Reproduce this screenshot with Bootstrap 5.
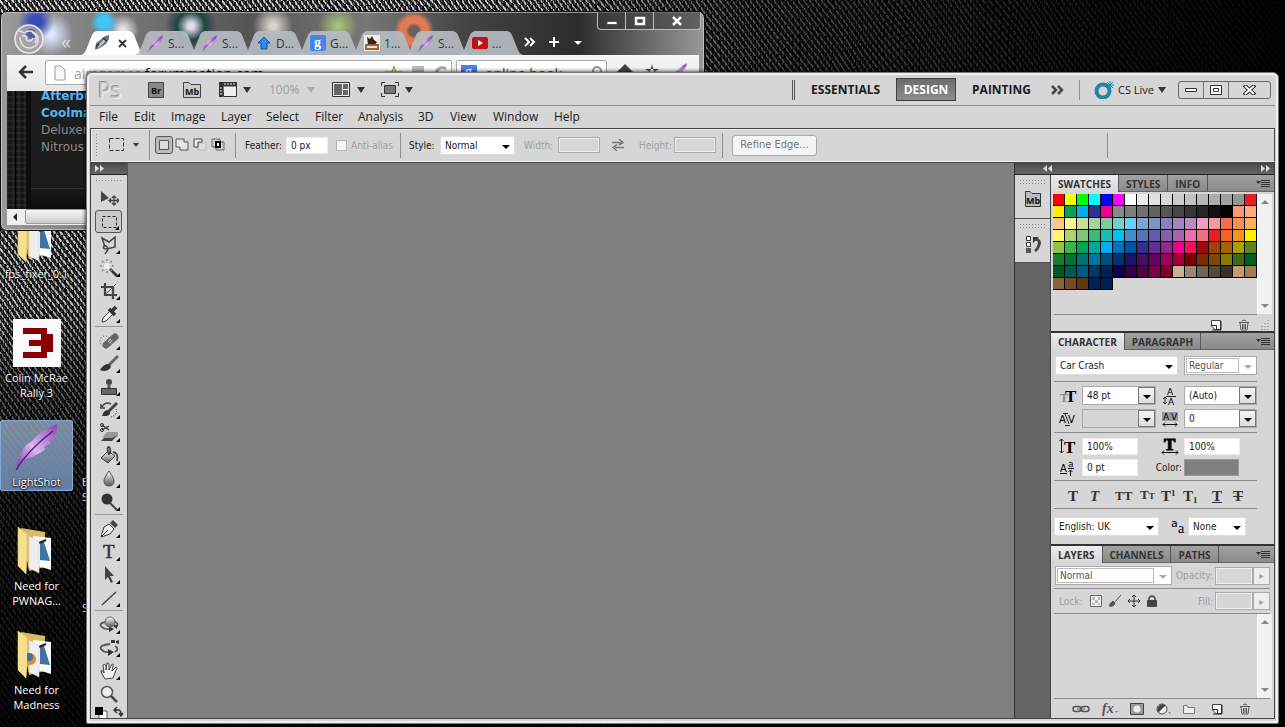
<!DOCTYPE html>
<html lang="en">
<head>
<meta charset="utf-8">
<meta name="viewport" content="width=device-width, initial-scale=1">
<title>Photoshop desktop</title>
<link href="https://cdn.jsdelivr.net/npm/bootstrap@5.3.0/dist/css/bootstrap.min.css" rel="stylesheet">
<style>
:root{--face:#d6d6d6;--rule:#8c8c8c;--ink:#1a1a1a;--dim:#a0a0a0;--ui:"Open Sans","Noto Sans",sans-serif;--small:"DejaVu Sans Condensed","DejaVu Sans",sans-serif}
html,body{height:100%}
body{margin:0;overflow:hidden;background:#050505;font:12px/15px var(--ui);color:var(--ink)}
button,input,select{font:inherit;color:inherit}
button{border:0;background:none;padding:0}
svg{display:block;flex:none}
a{color:inherit;text-decoration:none}
.desktop{position:relative;height:100vh;overflow:hidden}
.wall{position:absolute;inset:0;width:100%;height:100%}
/* desktop icons */
.shortcuts{position:relative;padding-top:212px;width:73px}
.shortcut{height:104px}
.shortcut>a{display:flex;flex-direction:column;align-items:center;padding:2px 0 1px;color:#fff;text-align:center;border:1px solid transparent;border-radius:2px;font-size:11px;text-shadow:0 1px 2px #000,0 0 2px #000}
.shortcut.on>a{background:linear-gradient(#8c9db4dd,#6a86b0ee);border-color:#86a8d5}
.shortcut svg{margin-bottom:3px}
.shortcut a span{white-space:pre-line;width:76px}
.second-col{position:absolute;left:82px;top:474px;color:#fff;font-size:11px}
/* browser */
.browser{position:absolute;left:0;top:11px;width:705px;height:220px;border:1px solid #111;border-radius:7px;box-shadow:inset 0 0 0 1px #ddd9;padding:19px 5px 6px 6px;
background:radial-gradient(circle at 35px 10px,#3a4db8 0 6px,transparent 18px),radial-gradient(circle at 50px 22px,#dfe6ff 0 3px,transparent 22px),radial-gradient(circle at 103px 10px,#42c4f4 0 6px,transparent 14px),radial-gradient(circle at 122px 18px,#e8e8e8 0 2px,transparent 16px),radial-gradient(circle at 190px 14px,#dde 0 3px,#1f4440 14px,transparent 26px),radial-gradient(circle at 272px 14px,#d8d2ca 0 3px,transparent 20px),radial-gradient(circle at 337px 14px,#a8c07a 0 2px,transparent 20px),radial-gradient(circle at 413px 19px,#68605e 0 5px,#e07a54 8px 14px,transparent 20px),linear-gradient(90deg,#9a9a9a,#6e6e6e 22%,#555 35%,#777 52%,#444 66%,#2c2c2c 82%,#999)}
.wbtns{position:absolute;right:3px;top:0;border:1px solid #bbb;border-top:0;border-radius:0 0 4px 4px;overflow:hidden;height:18px;background:#3338}
.wbtns button{width:28px;border-right:1px solid #bbb;display:flex;align-items:center;justify-content:center}
.wbtns button:last-child{width:46px;border:0}
.tabs{height:24px;padding-left:73px}
.fox{position:absolute;left:13px;top:12px}
.chev{position:absolute;left:60px;top:22px;color:#ddd;font-size:20px;line-height:15px}
.btab{width:66px;margin-right:-12px;height:24px;background:#b7bcc3e8;clip-path:path('M0 24 Q4 24 6 19 L12 4 Q14 0 18 0 H48 Q52 0 54 4 L60 19 Q62 24 66 24Z');padding-left:14px;color:#333;font-size:12px}
.btab.live{background:#fff}
.bbar{height:36px;background:linear-gradient(#f6f6f6,#e6e6e6);padding:5px 8px 0 10px;color:#444}
.bbox{background:#fff;border:1px solid #aaa;border-radius:2px;height:25px;overflow:hidden}
.bbox input{border:0;background:none;font-size:14px;padding:0;min-width:0;line-height:18px}
.burl{font-size:14px;line-height:18px;color:#000}
.bpage{height:118px;background:#1c1c1c;color:#8b8b8b;font:13px/17px "DejaVu Sans",sans-serif;padding-left:34px;position:relative;overflow:hidden}
.bpage::before{content:"";position:absolute;left:0;top:0;bottom:0;width:24px;background:linear-gradient(90deg,transparent 8px,#000 8px 9px,transparent 9px 19px,#0c0c0c 19px),radial-gradient(circle,#151515 2px,#2a2a2a 3px) 0 0/6px 6px}
.bpage::after{content:"";position:absolute;left:24px;right:0;top:97px;bottom:0;border-top:1px solid #333;background:linear-gradient(#181818,#0d0d0d)}
.bpage a{display:block;font-size:12px}.bpage .hot{color:#56b3f5;font-weight:700}
.bpage a:first-child{margin-top:-3px}
.bscroll{height:16px;background:#eee;padding-left:18px;position:relative}
.bscroll div{height:15px;border:1px solid #999;border-radius:2px;background:linear-gradient(#f6f6f6,#ccc)}
.bscroll::before{content:"";position:absolute;left:6px;top:4px;border:4px solid transparent;border-right-color:#222;border-left:0}
/* photoshop */
.ps{position:absolute;left:86px;top:72px;right:6px;bottom:3px;background:var(--face);border:1px solid #777;border-radius:6px 6px 2px 2px;box-shadow:inset 0 0 0 2px #f0f0f0,0 0 4px #000;padding:1px 3px 4px 3px}
.appbar{height:32px;border-bottom:1px solid var(--rule);display:grid;grid-template-columns:50px 35px 36px 24px 26px 38px 25px 25px 24px 20px 1fr;align-items:center;padding-left:8px}
.tri{width:0;height:0;border:4px solid transparent;border-top:6px solid #333;border-bottom:0;display:block}
.tri.s{border-width:3px;border-top-width:4px;border-bottom:0}
.tri.dim{border-top-color:#aaa}
.pslogo{font:400 21px/24px "Open Sans",sans-serif;color:#c4c4c4;text-shadow:1px 1px #f2f2f2,-1px -1px #909090}
.ws{font-weight:700;font-size:12px}
.ws.on{background:linear-gradient(#6c6c6c,#8c8c8c);border:1px solid #3e3e3e;color:#fff;height:23px;width:60px}
.dbl{width:3px;height:20px;border-left:1px solid #555;border-right:1px solid #555}
.vr1{width:1px;background:var(--rule)}
.more{margin:0 10px 0 16px;padding:0 4px}
.cslive{margin:0 12px 0 14px;font-size:11px}
.pswin{height:18px;border:1px solid #666;border-radius:3px;overflow:hidden}
.pswin button{width:25px;border-right:1px solid #777;display:flex;align-items:center;justify-content:center}
.pswin button:last-child{width:41px;border:0}
.menus{height:22px;display:grid;grid-template-columns:35px 37px 50px 45px 49px 43px 60px 32px 43px 61px 1fr;align-items:center;padding-left:9px}
.menus a{line-height:20px}
.opts{height:34px;border:1px solid #444;border-bottom-color:#f2f2f2;box-shadow:inset 1px 1px #eee;display:grid;grid-template-columns:18px 24px 16px 6px 80px 10px 41px 50px 64px 9px 31px 84px 34px 54px 27px 35px 48px 10px 85px 290px 1fr;align-items:center;font-family:var(--small);font-size:10px;padding-left:0}
.opts .vr1{height:25px}
.dim{color:var(--dim)}
.grip{background:radial-gradient(circle,#888 0 .7px,transparent 1px) 0 0/3px 3px}
.fld{background:#fff;border:1px solid #ececec;border-radius:0;padding:0 4px;height:17px;width:100%;min-width:0;font-family:var(--small);font-size:10px;display:block}
.fld.off{background:var(--face);border:1px solid #aaa;box-shadow:inset 0 0 0 1px #eee;height:16px}
.tick{width:11px;height:11px;appearance:none;background:#f4f4f4;border:1px solid #b5b5b5;margin:0}
.w42{width:42px!important}.w56{width:56px!important}
.pick{position:relative;display:block}
.pick select{appearance:none;width:100%;height:19px;border:1px solid #ddd;background:#fff;border-radius:0;padding:0 4px;font-family:var(--small);font-size:10px;display:block;color:inherit;opacity:1}
.pick::after{content:"";position:absolute;right:5px;top:9px;border:4px solid transparent;border-top-color:#000;border-bottom:0;pointer-events:none}
.pick.btnd select{border-color:#aaa}
.pick.btnd::before{content:"";position:absolute;right:1px;top:1px;bottom:1px;width:17px;border:1px solid #777;background:linear-gradient(#f4f4f4,#ddd);pointer-events:none}
.pick.empty select{background:var(--face)}
.pick.off{color:#555}.pick.off::before{content:"";position:absolute;inset:2px 18px 2px 2px;border:1px solid #bbb;pointer-events:none}
.pick.off select{border-color:#aaa}
.pick.off::after{border-top-color:#aaa}
.mode{width:18px;height:18px;display:flex;align-items:center;justify-content:center}
.mode.on{border:1px solid #555;border-radius:3px;background:#bbb}
.refine{height:21px;border:1px solid #a5abb0;border-radius:3px;background:#f4f4f4;color:#777;font-family:var(--small);font-size:11px;line-height:14px}
.work{display:flex;min-height:0;flex:1;border:1px solid #444}
.hdr{height:12px;background:linear-gradient(#4a4a4a,#666);border-bottom:1px solid #222;color:#ddd;display:flex;align-items:center;flex:none}
.tools{width:37px;border-right:1px solid #555;background:var(--face)}
.tool{width:27px;height:23px;display:flex;align-items:center;justify-content:center;position:relative;margin:0 auto 0 4px}
.tool.on{border:1px solid #555;border-radius:3px;background:#c9c9c9}
.tool.m::after{content:"";position:absolute;right:2px;bottom:2px;border:2px solid #000;border-top-color:transparent;border-left-color:transparent}
.tsep{height:1px;margin:1px 4px 2px;background:#999;flex:none}
.canvas{background:#808080}
.dock{width:260px;background:#646464;border-left:1px solid #333}
.iconcol{width:35px}
.iconcol>div{background:var(--face);border-bottom:1px solid #555;height:44px;padding-top:4px}
.iconcol .grip{height:5px;margin:0 4px 6px}
.panels{width:224px;border-left:1px solid #444;background:#333;gap:2px}
.panel{background:var(--face)}
.ptabs{height:17px;background:linear-gradient(#a2a2a2,#8a8a8a);border-bottom:1px solid #666;font-weight:700;font-size:10px}
.ptabs button{border-right:1px solid #555;padding:0 7px;height:17px;color:#333;line-height:16px}
.ptabs button.on{background:linear-gradient(#eee,#d6d6d6)}
.sw{display:grid;grid-template-columns:repeat(17,12px);align-content:start;width:204px}
.sw button{height:12px;border:solid #000;border-width:0 1px 1px 0}
.sbar{width:15px;background:#f1f1f1;border-left:1px solid #fff;padding:6px 0;display:flex;flex-direction:column;justify-content:space-between;align-items:center}
.sbar.tall{height:120px}
.sbar i{border:4px solid transparent}
.sbar i:first-child{border-bottom-color:#888;border-top:0}.sbar i:last-child{border-top-color:#888;border-bottom:0}
.rl{height:1px;background:var(--rule);margin:0 17px 0 3px}
.crow{display:grid;grid-template-columns:27px 74px 28px 73px;row-gap:4px;padding:4px 0 4px 4px;align-items:center;font-family:var(--small);font-size:10px}
.colorlbl{margin-left:-20px;padding-right:2px;text-align:right}
.colorbtn{width:55px;height:17px;background:#808080;border:1px solid #999}
.ser{display:grid;grid-template-columns:22px 25px 25px 21px 22px 29px 21px 20px;padding:6px 0 4px 17px;font-family:"Liberation Serif",serif;font-weight:700;font-size:15px;line-height:16px;color:#333}
.ser button{text-align:left}
.caps{font-size:13px}.tiny{font-size:9px}
.lrow{padding:3px 4px;font:10px var(--small)}
.lrow .fld{width:38px;height:18px}
.slid{width:17px;height:18px;border:1px solid #aaa;background:#eee}
</style>
</head>
<body>
<svg width="0" height="0" class="position-absolute">
<defs>
<linearGradient id="met" x1="0" y1="0" x2="0" y2="1"><stop stop-color="#fff"/><stop offset="1" stop-color="#555"/></linearGradient>
<linearGradient id="pur" x1="1" y1="0" x2="0" y2="1"><stop stop-color="#8d43b5"/><stop offset=".55" stop-color="#dcb6ee"/><stop offset="1" stop-color="#7f35aa"/></linearGradient>
<symbol id="feather" viewBox="0 0 48 48"><path d="M44 1Q45 12 37 18L38 20 31 24 33 26Q22 34 8 38L4 47Q3 36 9 29 11 22 18 19 29 6 44 1Z" fill="url(#pur)"/><path d="M3 47Q14 28 40 8" fill="none" stroke="#4d1773" stroke-width="1.300"/></symbol>
<symbol id="folder" viewBox="0 0 48 48"><path d="M8 1 32 5V40L16 44Z" fill="#d9bd63"/><path d="M20 9 38 11V43L22 38Z" fill="#fbfbfb"/><path d="M27 14 31 15 37 34 27 33Z" fill="#3d74a3"/><path d="M26 16 33 13" stroke="#222" stroke-width="2"/><path d="M16 9 26 15V46L16 41Z" fill="#eee" stroke="#ccc" stroke-width=".6"/><path d="M5 0 14 7V32L13 47 5 39Z" fill="#f7df90" stroke="#e2c469" stroke-width=".6"/></symbol>
<symbol id="menuic" viewBox="0 0 14 8"><path d="M0 2H5L2.500 5Z" fill="#333"/><path d="M5 1.500H14M5 3.500H14M5 5.500H14M5 7.500H14" stroke="#333"/></symbol>
<symbol id="newpg" viewBox="0 0 12 12"><path d="M1.500 1.500H10.500V10.500H5L1.500 7Z" fill="#f4f4f4" stroke="#444"/><path d="M2 6.500H6.500V10" fill="none" stroke="#222"/><path d="M11 2V11H2" fill="none" stroke="#222"/></symbol>
<symbol id="trash" viewBox="0 0 12 12"><path d="M2 4 3 11H9L10 4" fill="#ddd" stroke="#555"/><path d="M1 3.500H11M4 2 6 1 8 2M4.500 5V10M6 5V10M7.500 5V10" fill="none" stroke="#555"/></symbol>
<pattern id="weave" width="6" height="8" patternUnits="userSpaceOnUse"><rect width="6" height="8" fill="#0a0a0a"/><path d="M0 0 2 4M3 4 5 8" stroke="#e2e2e2" stroke-width="1.800"/><path d="M3 0 4 2M0 5 1 7" stroke="#777"/></pattern>
<linearGradient id="fadeY" x1="0" y1="0" x2="0" y2="1"><stop stop-color="#000" stop-opacity="0"/><stop offset=".42" stop-color="#000" stop-opacity=".15"/><stop offset=".52" stop-color="#000" stop-opacity=".55"/><stop offset=".7" stop-color="#000" stop-opacity=".82"/><stop offset="1" stop-color="#000" stop-opacity=".95"/></linearGradient>
<linearGradient id="fadeX" x1="0" y1="0" x2="1" y2="0"><stop stop-color="#000" stop-opacity="0"/><stop offset=".4" stop-color="#000" stop-opacity=".1"/><stop offset=".58" stop-color="#000" stop-opacity=".65"/><stop offset=".85" stop-color="#000" stop-opacity=".9"/><stop offset="1" stop-color="#000" stop-opacity=".97"/></linearGradient>
<filter id="wavy"><feTurbulence type="fractalNoise" baseFrequency=".018 .012" numOctaves="1" seed="4"/><feDisplacementMap in="SourceGraphic" scale="30"/></filter>
</defs></svg>

<main class="desktop">
<svg class="wall"><rect x="-30" y="-30" width="110%" height="110%" fill="url(#weave)" filter="url(#wavy)"/><rect width="100%" height="100%" fill="url(#fadeY)"/><rect width="100%" height="100%" fill="url(#fadeX)"/></svg>

<nav class="shortcuts">
 <div class="shortcut"><a href="#"><svg width="48" height="48"><use href="#folder"/></svg><span>fps_fixer_0.1</span></a></div>
 <div class="shortcut"><a href="#"><svg width="48" height="48"><path fill="#fafafa" d="M0 0H48V48H0Z"/><path fill="#8b0000" d="M10 9H34V15H40V33H34V39H10V33H28V27H16V21H28V15H10Z"/></svg><span>Colin McRae
Rally 3</span></a></div>
 <div class="shortcut on"><a href="#"><svg width="48" height="48"><use href="#feather"/></svg><span>LightShot</span></a></div>
 <div class="shortcut"><a href="#"><svg width="48" height="48"><use href="#folder"/></svg><span>Need for
PWNAG...</span></a></div>
 <div class="shortcut"><a href="#"><svg width="48" height="48"><use href="#folder"/><circle cx="17" cy="28" r="6" fill="#e88a25"/><circle cx="16" cy="26" r="4" fill="#3d74a3"/><path d="M5 0 14 7V32L13 47 5 39Z" fill="#f7df90"/></svg><span>Need for
Madness</span></a></div>
</nav>
<div class="second-col">E<br>S<div class="mt-5 pt-5">S</div></div>

<section class="browser">
 <svg class="fox" width="30" height="30"><circle cx="15" cy="15" r="14" fill="#aaac" stroke="#e8e8e8" stroke-width="1.600"/><circle cx="17" cy="10" r="5" fill="#55609b"/><path d="M5 7Q8 7 10 9 16 5 21 9 26 13 23 20 18 26 11 23 6 20 6 13M8 12Q11 11 13 13 11 15 14 17 18 17 19 14M18 8Q25 12 21 19" fill="none" stroke="#e4e4e4" stroke-width="1.500"/></svg>
 <span class="chev">«</span>
 <div class="wbtns d-flex"><button aria-label="Minimize"><svg width="12" height="8"><path fill="#fff" stroke="#555" d="M1 4.500H11V7.500H1Z"/></svg></button><button aria-label="Maximize"><svg width="12" height="10"><path fill="none" stroke="#fff" stroke-width="2.500" d="M2 2H10V8H2Z"/></svg></button><button aria-label="Close"><svg width="12" height="10"><path stroke="#fff" stroke-width="2.500" d="M2 1 10 9M10 1 2 9"/></svg></button></div>
 <div class="tabs d-flex">
  <button class="btab live d-flex align-items-center" aria-label="Active tab"><svg width="16" height="16"><path d="M1 15 2 8 5 6 11 1 15 0 15 4 12 9 6 13Z" fill="#6c7585"/><path d="M4 12 12 4" stroke="#c6d0e0" stroke-width="2"/><path d="M2 12 5 9M9 3 13 6" stroke="#333d50" stroke-width="2"/></svg><svg class="ms-2" width="9" height="9"><path d="M1 1 8 8M8 1 1 8" stroke="#333" stroke-width="1.800"/></svg></button>
  <button class="btab d-flex align-items-center gap-1"><svg width="16" height="16"><use href="#feather"/></svg>S...</button>
  <button class="btab d-flex align-items-center gap-1"><svg width="16" height="16"><use href="#feather"/></svg>S...</button>
  <button class="btab d-flex align-items-center gap-1"><svg width="16" height="16"><path d="M8 2 14 8H11V14H5V8H2Z" fill="#2c8df2" stroke="#0d56ae"/></svg>D...</button>
  <button class="btab d-flex align-items-center gap-1"><svg width="16" height="16"><rect width="16" height="16" rx="2" fill="#4484f0"/><text x="4" y="12" fill="#fff" font-size="14" font-weight="700" font-family="Liberation Serif">g</text></svg>G...</button>
  <button class="btab d-flex align-items-center gap-1"><svg width="16" height="16"><path fill="#f2ece6" d="M0 0H16V16H0Z"/><path fill="#3a1f16" d="M3 2 6 4 8 1 10 5 13 7 11 10H4Z"/><path fill="#a85f30" d="M1 9H15V15H1Z"/><path fill="#e8e0d6" d="M3 11H13V13H3Z"/></svg>1...</button>
  <button class="btab d-flex align-items-center gap-1"><svg width="16" height="16"><use href="#feather"/></svg>S...</button>
  <button class="btab d-flex align-items-center gap-1"><svg width="16" height="12"><rect width="16" height="12" rx="2" fill="#c5100f"/><path fill="#fff" d="M6 3 11 6 6 9Z"/></svg>...</button>
  <svg style="margin-left:12px" width="66" height="22"><path d="M1 7 5 11 1 15M6 7 10 11 6 15M25 11H35M30 6V16" fill="none" stroke="#fff" stroke-width="2"/><path d="M50 10H58L54 14Z" fill="#fff"/></svg>
 </div>
 <div class="bbar d-flex align-items-start gap-1">
  <svg class="me-1 mt-1" width="20" height="16"><path d="M16 8H3M9 2 3 8 9 14" fill="none" stroke="#333" stroke-width="2.500"/></svg>
  <div class="bbox d-flex flex-grow-1 ps-2 pt-1 gap-1"><svg class="me-1" width="12" height="16"><path d="M1 1H7L11 5V15H1Z" fill="#f8f8f8" stroke="#999"/></svg><div class="burl flex-grow-1"><span class="dim">aimgames.</span>forummotion.com</div><svg width="66" height="20"><path d="M9 1 11 7H18L12 11 14 18 9 14 4 18 6 11 0 7H7Z" fill="#f4dc86" stroke="#b78d2c"/><rect x="27" y="1" width="12" height="14" fill="#bbb"/><path d="M63 10A6 6 0 1 1 61 4" fill="none" stroke="#aaa" stroke-width="3"/></svg></div>
  <div class="bbox d-flex ps-1 pt-1 gap-2 align-items-start"><svg width="16" height="16"><rect width="16" height="16" fill="#4484f0"/><text x="4" y="11" fill="#fff" font-size="14" font-weight="700" font-family="Liberation Serif">g</text></svg><input aria-label="Search" size="10" value="online book"><svg width="16" height="16"><circle cx="7" cy="6" r="4" fill="none" stroke="#999" stroke-width="2"/></svg></div>
  <svg class="ms-1" width="76" height="18"><path d="M2 12 10 4 18 12M30 9H44L39 12 37 4 35 12Z" fill="#444"/><use href="#feather" x="58" y="3" width="15" height="15"/></svg>
 </div>
 <div class="bpage"><a class="hot" href="#">Afterburner</a><a class="hot" href="#">Coolmath</a><a href="#">Deluxeness</a><a href="#">Nitrous</a></div>
 <div class="bscroll"><div></div></div>
</section>

<section class="ps d-flex flex-column">
 <header class="appbar">
  <span class="pslogo">Ps</span>
  <button aria-label="Bridge"><svg width="16" height="16"><path d="M.5 .5H15.500V15.500H.5Z" fill="#888" stroke="#444"/><text x="3" y="12" font-size="9" font-weight="700" fill="#111" font-family="Open Sans">Br</text></svg></button>
  <button aria-label="Mini Bridge"><svg width="19" height="16"><path d="M.5 .5H6L8 2.500H17.500V15.500H.5Z" fill="#ccc" stroke="#444"/><text x="2" y="13" font-size="9" font-weight="700" fill="#111" font-family="Open Sans">Mb</text></svg></button>
  <button aria-label="View extras"><svg width="18" height="16"><path d="M0 0H18V4H4V15H0Z" fill="#333"/><path d="M4 4H17.500V14.500H4.500Z" fill="#eee" stroke="#333"/><path d="M6 1V3M9 1V3M12 1V3M15 1V3M1 6H3M1 9H3M1 12H3" stroke="#eee"/></svg></button>
  <span class="tri"></span><span class="dim">100%</span><span class="tri dim"></span>
  <button aria-label="Arrange"><svg width="18" height="16"><path d="M.5 .5H17.500V14.500H.5Z" fill="#eee" stroke="#333"/><path d="M2 2H10V13H2ZM11 2H16V7H11ZM11 8H16V13H11Z" fill="#666"/></svg></button>
  <span class="tri"></span>
  <button aria-label="Screen mode"><svg width="18" height="16"><path d="M.5 4V.5H4M14 .5H17.500V4M.5 11V14.500H4M14 14.500H17.500V11" fill="none" stroke="#333"/><path d="M3.500 3.500H14.500V11.500H3.500Z" fill="#777" stroke="#333"/></svg></button>
  <div class="d-flex align-items-center">
   <span class="tri ms-1"></span>
   <div class="d-flex align-items-center ms-auto pe-1">
    <span class="dbl"></span>
    <button class="ws ms-3">ESSENTIALS</button><button class="ws on mx-3">DESIGN</button><button class="ws">PAINTING</button>
    <button class="more" aria-label="More workspaces"><svg width="14" height="10"><path d="M1 1 5 5 1 9M7 1 11 5 7 9" fill="none" stroke="#444" stroke-width="2.500"/></svg></button>
    <span class="vr1" style="height:20px"></span>
    <button class="cslive d-flex align-items-center gap-1"><svg width="20" height="18"><circle cx="9" cy="10" r="6.500" fill="none" stroke="#2584ab" stroke-width="4"/><path d="M16 0V8M12 4H20M13 1 19 7M19 1 13 7" stroke="#1c86b6"/></svg>CS Live<span class="tri"></span></button>
    <div class="pswin d-flex"><button aria-label="Minimize"><svg width="12" height="6"><path d="M.5 1.500H11.500V4.500H.5Z" fill="#fff" stroke="#333"/></svg></button><button aria-label="Restore"><svg width="12" height="10"><path d="M.5 .5H11.500V9.500H.5ZM3.500 3.500H8.500V6.500H3.500Z" fill="#fff" stroke="#333"/></svg></button><button aria-label="Close"><svg width="13" height="10"><path d="M1 0 12 10M12 0 1 10" stroke="#333" stroke-width="4"/><path d="M2 1 11 9M11 1 2 9" stroke="#fff" stroke-width="2"/></svg></button></div>
   </div>
  </div>
 </header>
 <nav class="menus"><a href="#">File</a><a href="#">Edit</a><a href="#">Image</a><a href="#">Layer</a><a href="#">Select</a><a href="#">Filter</a><a href="#">Analysis</a><a href="#">3D</a><a href="#">View</a><a href="#">Window</a><a href="#">Help</a></nav>
 <div class="opts">
  <span class="grip ms-1" style="width:4px;height:24px"></span>
  <svg width="16" height="14"><path d="M.5 .5H14.500V12.500H.5Z" fill="none" stroke="#333" stroke-dasharray="4 2"/></svg>
  <span class="tri s"></span><span class="vr1" style="height:30px"></span>
  <div class="d-flex">
   <button class="mode on" aria-label="New selection"><svg width="12" height="12"><path d="M1.500 1.500H10.500V10.500H1.500Z" fill="#ddd" stroke="#555"/></svg></button>
   <button class="mode" aria-label="Add"><svg width="14" height="14"><path d="M1 1H9V4H13V12H5V9H1Z" fill="#e4e4e4" stroke="#555"/></svg></button>
   <button class="mode" aria-label="Subtract"><svg width="14" height="14"><path d="M5 5H13V12H5Z" fill="#ddd" stroke="#bbb"/><path d="M1 9V1H9V4H5V9Z" fill="#eee" stroke="#444"/></svg></button>
   <button class="mode" aria-label="Intersect"><svg width="14" height="14"><path d="M1 1H9V9H1ZM5 4H13V12H5Z" fill="#ccc" stroke="#666"/><path d="M5 4H9V9H5Z" fill="#fff" stroke="#000" stroke-width="2"/></svg></button>
  </div>
  <span class="vr1"></span>
  <label for="fe">Feather:</label><span class="pe-2"><input id="fe" class="fld" value="0 px"></span>
  <label class="d-flex align-items-center gap-1 dim"><input type="checkbox" class="tick">Anti-alias</label>
  <span class="vr1"></span>
  <label for="st">Style:</label><span class="pick" style="width:75px"><select id="st"><option>Normal</option></select></span>
  <label for="wi" class="dim">Width:</label><span><input id="wi" class="fld off w42"></span>
  <svg width="12" height="12"><path d="M0 3.500H9M7 0 11 3.500 7 6M12 8.500H3M5 5.500 1 8.500 5 12" fill="none" stroke="#777" stroke-width="1.500"/></svg>
  <label for="he" class="dim">Height:</label><span><input id="he" class="fld off w42"></span>
  <span class="vr1"></span><button class="refine">Refine Edge...</button><span></span><span class="vr1"></span>
 </div>
 <div class="work">
  <aside class="tools d-flex flex-column overflow-hidden">
   <div class="hdr ps-1"><svg width="9" height="7"><path d="M0 0 4 3.500 0 7ZM5 0 9 3.500 5 7Z" fill="#ddd"/></svg></div>
   <div class="grip mx-1 my-1 flex-shrink-0" style="height:4px"></div>
   <div id="tools" class="flex-grow-1"></div>
  </aside>
  <div class="canvas flex-grow-1"></div>
  <aside class="dock d-flex flex-column">
   <div class="hdr px-1"><svg class="ms-4" width="9" height="7"><path d="M4 0 0 3.500 4 7ZM9 0 5 3.500 9 7Z" fill="#ddd"/></svg><svg class="ms-auto" width="9" height="7"><path d="M0 0 4 3.500 0 7ZM5 0 9 3.500 5 7Z" fill="#ddd"/></svg></div>
   <div class="d-flex flex-grow-1">
    <div class="iconcol">
     <div><div class="grip"></div><button class="d-flex mx-auto" aria-label="Mini Bridge"><svg width="18" height="18"><path d="M1.500 1.500H6L8 3.500H16.500V16.500H1.500Z" fill="#bbb" stroke="#333"/><text x="2" y="14" font-size="9" font-weight="700" fill="#111" font-family="Open Sans">Mb</text></svg></button></div>
     <div><div class="grip"></div><button class="d-flex mx-auto" aria-label="History"><svg width="18" height="20"><path d="M2.500 2.500H6.500V6.500H2.500ZM2.500 8.500H6.500V12.500H2.500Z" fill="#fff" stroke="#333"/><path d="M2 14H7V19H2Z" fill="#555"/><path d="M9 3H15L9 9Z" fill="#333"/><path d="M11 5Q17 6 15 11 14 15 11 17" fill="none" stroke="#444" stroke-width="3"/></svg></button></div>
    </div>
    <div class="panels d-flex flex-column flex-grow-1">
     <section class="panel">
      <div class="ptabs d-flex"><button class="on">SWATCHES</button><button>STYLES</button><button>INFO</button><svg class="ms-auto me-1 mt-1" width="14" height="8"><use href="#menuic"/></svg></div>
      <div class="d-flex justify-content-between" style="padding:2px 2px 0"><div id="sw" class="sw"></div><div class="sbar tall"><i></i><i></i></div></div>
      <div class="rl"></div>
      <div class="d-flex justify-content-end gap-3 pt-1" style="height:16px"><button aria-label="New swatch"><svg width="12" height="12"><use href="#newpg"/></svg></button><button aria-label="Delete swatch"><svg width="12" height="12"><use href="#trash"/></svg></button><svg style="margin-left:-6px" class="me-1" width="10" height="11"><path d="M8 1V11M5 4V11M2 7V11" stroke="#888" stroke-dasharray="1 2"/></svg></div>
     </section>
     <section class="panel">
      <div class="ptabs d-flex"><button class="on">CHARACTER</button><button>PARAGRAPH</button><svg class="ms-auto me-1 mt-1" width="14" height="8"><use href="#menuic"/></svg></div>
      <div class="d-flex" style="padding:6px 0 6px 4px;gap:6px"><span class="pick" style="width:123px"><select aria-label="Font"><option>Car Crash</option></select></span><span class="pick off" style="width:73px"><select aria-label="Font style"><option>Regular</option></select></span></div>
      <div class="rl"></div>
      <div class="crow">
       <svg width="22" height="18"><text x="5" y="15" font-size="12" fill="#888" font-family="Liberation Serif" font-weight="700">T</text><text x="10" y="15" font-size="17" font-weight="700" font-family="Liberation Serif">T</text></svg><span class="pick btnd"><select aria-label="Size"><option>48 pt</option></select></span>
       <svg class="mx-auto" width="16" height="18"><text x="5" y="8" font-size="9" font-family="DejaVu Sans">A</text><text x="6" y="18" font-size="9" font-family="DejaVu Sans">A</text><path d="M4 9.500H14M3 10V17M1 12 3 10 5 12M1 15 3 17 5 15" stroke="#222" fill="none"/></svg><span class="pick btnd"><select aria-label="Leading"><option>(Auto)</option></select></span>
       <svg width="22" height="16"><text x="4" y="12" font-size="10" font-family="DejaVu Sans">A</text><text x="13" y="12" font-size="10" font-family="DejaVu Sans">V</text><path d="M10 3 14 13M8 2.500H13M10 14.500H15" stroke="#222"/></svg><span class="pick btnd empty"><select aria-label="Kerning"><option></option></select></span>
       <svg class="mx-auto" width="18" height="16"><path fill="#999" d="M1 1H17V10H1Z"/><text x="2" y="9" font-size="9" font-family="DejaVu Sans">A</text><text x="10" y="9" font-size="9" font-family="DejaVu Sans">V</text><path d="M2 13.500H16M4 11.500 2 13.500 4 15.500M14 11.500 16 13.500 14 15.500" fill="none" stroke="#111"/></svg><span class="pick btnd"><select aria-label="Tracking"><option>0</option></select></span>
      </div>
      <div class="rl"></div>
      <div class="crow">
       <svg width="22" height="16"><text x="9" y="15" font-size="17" font-weight="700" font-family="Liberation Serif">T</text><path d="M6.500 1V15M4.500 3 6.500 1 8.500 3M4.500 13 6.500 15 8.500 13" fill="none" stroke="#111"/></svg><input class="fld w56" aria-label="Vertical scale" value="100%">
       <svg class="mx-auto" width="18" height="18"><text x="3" y="13" font-size="17" font-weight="700" font-family="Liberation Serif" stroke="#000">T</text><path d="M1 15.500H17M3 13.500 1 15.500 3 17.500M15 13.500 17 15.500 15 17.500" fill="none" stroke="#111"/></svg><input class="fld w56" aria-label="Horizontal scale" value="100%">
       <svg width="22" height="16"><text x="5" y="12" font-size="10" font-family="DejaVu Sans">A</text><text x="13" y="7" font-size="9" font-family="DejaVu Sans">a</text><path d="M5 13.500H12M13 8.500H19M15.500 16V10M13.500 12 15.500 10 17.500 12" fill="none" stroke="#111"/></svg><input class="fld w56" aria-label="Baseline shift" value="0 pt">
       <span class="colorlbl">Color:</span><button class="colorbtn" aria-label="Text color"></button>
      </div>
      <div class="rl"></div>
      <div class="ser"><button>T</button><button class="fst-italic">T</button><button class="caps">TT</button><button class="caps">T<span class="tiny">T</span></button><button>T<sup class="tiny">1</sup></button><button>T<sub class="tiny">1</sub></button><button class="text-decoration-underline">T</button><button class="text-decoration-line-through">T</button></div>
      <div class="rl"></div>
      <div class="d-flex align-items-center" style="padding:8px 0 8px 3px;gap:8px"><span class="pick" style="width:105px"><select aria-label="Language"><option>English: UK</option></select></span><svg class="ms-1" width="14" height="16"><text x="0" y="8" font-size="11" font-family="DejaVu Sans">a</text><text x="7" y="14" font-size="14" font-family="Liberation Serif">a</text></svg><span class="pick" style="width:58px;margin-left:-5px"><select aria-label="Anti-alias"><option>None</option></select></span></div>
     </section>
     <section class="panel d-flex flex-column flex-grow-1">
      <div class="ptabs d-flex"><button class="on">LAYERS</button><button>CHANNELS</button><button>PATHS</button><svg class="ms-auto me-1 mt-1" width="14" height="8"><use href="#menuic"/></svg></div>
      <div class="lrow d-flex align-items-center dim"><span class="pick off me-1" style="width:117px"><select aria-label="Blend mode"><option>Normal</option></select></span><label for="op">Opacity:</label><input id="op" class="fld off ms-auto"><button class="slid" aria-label="Opacity slider">▸</button></div>
      <div class="rl me-1"></div>
      <div class="lrow d-flex align-items-center dim ps-2" style="gap:7px">Lock:<svg width="12" height="12"><path d="M.5 .5H11.500V11.500H.5Z" fill="#f5f5f5" stroke="#666"/><path d="M2 2H5V5H2ZM8 2H10V5H8ZM5 5H8V8H5ZM2 8H5V10H2ZM8 8H10V10H8Z" fill="#bbb"/></svg><svg width="12" height="12"><path d="M12 0 5 8M0 11Q5 12 6 8L4 6Q1 8 0 11Z" fill="#555" stroke="#555"/></svg><svg width="12" height="12"><path d="M6 0V12M0 6H12M4 2 6 0 8 2M4 10 6 12 8 10M2 4 0 6 2 8M10 4 12 6 10 8" fill="none" stroke="#333"/></svg><svg width="10" height="12"><path d="M2 5V3Q5-1 8 3V5" fill="none" stroke="#444" stroke-width="1.500"/><rect y="5" width="10" height="7" rx="1" fill="#444"/></svg><label for="fi" class="ms-auto">Fill:</label><div class="d-flex" style="margin-left:-5px"><input id="fi" class="fld off"><button class="slid" aria-label="Fill slider">▸</button></div></div>
      <div class="rl me-1"></div>
      <div class="d-flex flex-grow-1 justify-content-end" style="padding-right:2px"><div class="sbar"><i></i><i></i></div></div>
      <div class="rl me-1"></div>
      <div class="d-flex align-items-center" style="height:19px;padding-left:21px;gap:12px">
       <svg width="18" height="8"><rect x="1" y="1.500" width="8" height="5" rx="2.500" fill="none" stroke="#555" stroke-width="1.500"/><rect x="9" y="1.500" width="8" height="5" rx="2.500" fill="none" stroke="#555" stroke-width="1.500"/><path d="M5 4H13" stroke="#555"/></svg>
       <svg width="16" height="14"><text x="0" y="11" font-size="14" font-style="italic" font-weight="700" fill="#555" font-family="Liberation Serif">fx</text><path d="M13 9H16L14.500 11Z" fill="#888"/></svg>
       <svg width="14" height="12"><path d="M.5 .5H13.500V11.500H.5Z" fill="#999" stroke="#444"/><circle cx="7" cy="6" r="3.500" fill="#eee"/></svg>
       <svg width="15" height="12"><circle cx="6" cy="6" r="5" fill="#eee" stroke="#444"/><path d="M2.500 9.500A5 5 0 0 1 9.500 2.500Z" fill="#444"/><path d="M12 9H15L13.500 11Z" fill="#888"/></svg>
       <svg width="12" height="10"><path d="M.5 1.500H4L5 3.500H11.500V9.500H.5Z" fill="#eee" stroke="#777"/></svg>
       <svg class="ms-1" width="12" height="12"><use href="#newpg"/></svg><svg class="ms-1" width="12" height="12"><use href="#trash"/></svg>
      </div>
     </section>
    </div>
   </div>
  </aside>
 </div>
</section>
</main>
<script>
// swatch colours, seventeen to a row
const rows=['f00 ff0 0f0 0ff 00f f0f fff ebebeb e1e1e1 d7d7d7 ccc c2c2c2 b7b7b7 acacac a0a0a0 959595 ed1c24','fff200 00a651 00aeef 2e3192 ec008c 898989 7d7d7d 707070 626262 555 464646 363636 262626 111 000 f7977a fbad82','fdc68c fff799 c6df9c a4d49d 81ca9d 7bcdc9 6ccff7 7ca6d8 8293ca 8881be a286bd bc8cbf f49bc1 f5999d f26c4f f68e56 fbaf5d','fff568 acd373 7cc576 3cb878 1cbbb4 00bff3 438ccb 5574b9 605ca9 855fa8 a864a8 f06eaa f26d7d ed1c24 f26522 f7941d fff200','8dc63f 39b54a 00a651 00a99d 00aeef 0072bc 0054a6 2e3192 662d91 92278f ec008c ed145b 9e0b0f a0410d a36209 aba000 598527','1a7b30 007236 00746b 0076a3 004b80 003471 1b1464 440e62 630460 9e005d 9e0039 790000 7b2e00 7d4900 827b00 406618 005e20','005826 005952 005b7f 003663 002157 0d004c 32004b 4b0049 7b0046 7a0026 c7b299 998675 736357 534741 362f2d c69c6d a67c52','8c6239 754c24 603913 002157 001f50'];
document.getElementById('sw').innerHTML=rows.map(r=>r.split(' ').map(c=>`<button aria-label="#${c}" style="background:#${c}"></button>`).join('')).join('');
// tools, in panel order; '-' draws a divider
const T=[
['Move','<path d="M2 2V13L10 9Z" fill="#444"/><path d="M15 7V16M10 11.500H20M13 9 15 7 17 9M13 14 15 16 17 14M12 9.500 10 11.500 12 13.500M18 9.500 20 11.500 18 13.500" fill="none" stroke="#444" stroke-width="1.300"/>',0],
['Marquee','<path d="M3.500 4.500H17.500V15.500H3.500Z" fill="none" stroke="#222" stroke-dasharray="3 2"/>',1],
['Lasso','<path d="M6 12 3 3 10 7 16 2V12L8 14Q3 14 5 11 8 10 9 14 8 17 6 19" fill="none" stroke="#444" stroke-width="1.500"/>',1],
['Magic wand','<path d="M11 11 18 18" stroke="#333" stroke-width="2.500"/><path d="M8 1V15M1 8H15M3 3 13 13M13 3 3 13" stroke="#888" stroke-width="1.500" stroke-dasharray="2 1"/><circle cx="8" cy="8" r="3.500" fill="#eee"/>',1],
['Crop','<path d="M6 2V14H18M2 6H14V18" fill="none" stroke="#444" stroke-width="2.200"/><path d="M6 14 17 3" stroke="#555"/>',1],
['Eyedropper','<path d="M3 18 4 14 11 7 14 10 7 17Z" fill="#eee" stroke="#444"/><path d="M10 5 16 11M12 8 17 3" stroke="#333" stroke-width="3.500"/>',1],'-',
['Healing brush','<circle cx="6" cy="10" r="5" fill="none" stroke="#444" stroke-dasharray="1 2"/><path d="M7 14 16 6" stroke="#666" stroke-width="7" stroke-linecap="round"/><path d="M10 9 13 12" stroke="#ccc" stroke-width="4" stroke-dasharray="1 1"/>',1],
['Brush','<path d="M19 2 9 12" stroke="#666" stroke-width="3"/><path d="M1 16Q5 9 10 10 14 13 9 16 5 18 1 16Z" fill="#333"/>',1],
['Clone stamp','<circle cx="10" cy="5" r="3" fill="#444"/><path d="M10 7V12" stroke="#555" stroke-width="3"/><path d="M2.500 11.500H17.500V17.500H2.500Z" fill="#666" stroke="#333"/>',1],
['History brush','<path d="M18 3 10 11" stroke="#444" stroke-width="3"/><path d="M3 16Q5 9 10 10 13 14 8 16Z" fill="#333"/><path d="M12 4Q6 1 3 7M2 4V8H6" fill="none" stroke="#444" stroke-width="1.500"/><path d="M17 9Q19 15 12 17" fill="none" stroke="#333" stroke-dasharray="1 1"/>',1],
['Eraser','<path d="M2 18 8 12H19L13 18Z" fill="#444"/><path d="M8 9H19V12L13 15H3Z" fill="#999"/><path d="M3 2 10 7M3 7 10 3" stroke="#333" stroke-width="1.300"/><circle cx="3" cy="2" r="1.500" fill="none" stroke="#333"/><circle cx="3" cy="7" r="1.500" fill="none" stroke="#333"/>',1],
['Paint bucket','<path d="M2 12 9 5 16 10 9 17Z" fill="url(#met)" stroke="#444"/><path d="M10 9Q7 1 10 1 12 2 11 8M14 6Q20 7 18 15" fill="none" stroke="#444" stroke-width="1.800"/>',1],
['Blur','<path d="M10 2Q5 9 5 12 5 17 10 17 15 17 15 12 15 9 10 2Z" fill="url(#met)" stroke="#555"/>',1],
['Dodge','<circle cx="8" cy="7" r="5.500" fill="#333"/><path d="M11 11 18 18" stroke="#444" stroke-width="2"/>',1],'-',
['Pen','<path d="M2 18 5 8 10 5 15 10 11 15Z" fill="#eee" stroke="#333"/><path d="M2 18 9 11" stroke="#333"/><path d="M11 4 14 1 19 6 16 9Z" fill="#444"/>',1],
['Type','<text x="4" y="16" font-size="19" font-family="Liberation Serif" fill="#333" stroke="#333" stroke-width=".5">T</text>',1],
['Path selection','<path d="M6 1V15L9 12 12 18 14 17 11 11H15Z" fill="#444"/>',1],
['Line','<path d="M3 17 17 4" stroke="#444" stroke-width="1.500"/>',1],'-',
['3D rotate','<path d="M7 7Q0 8 2 11 5 15 13 14M15 6Q21 9 17 12" fill="none" stroke="#555" stroke-width="1.800"/><path d="M10 11 15 14 10 17ZM13 10H18V14Z" fill="#333"/><circle cx="11" cy="7" r="5" fill="url(#met)" stroke="#666"/>',1],
['3D camera','<path d="M11 6Q0 7 2 11 5 15 11 14M16 8Q21 11 16 14" fill="none" stroke="#555" stroke-width="1.800"/><path d="M9 11 15 14 9 18Z" fill="#333"/><path d="M12 2H16V5H12ZM17 3 20 2V6L17 5Z" fill="#333"/>',1],
['Hand','<path d="M6 18 2 11Q1 9 4 10L5 12 4 4Q6 2 7 5V9L8 2Q10 1 10 4V9L13 3Q15 3 14 5L13 10 17 6Q19 7 17 9L14 17Z" fill="#f2f2f2" stroke="#444"/>',1],
['Zoom','<circle cx="8" cy="8" r="5.500" fill="#eee" stroke="#555" stroke-width="1.500"/><path d="M12 12 18 18" stroke="#444" stroke-width="2.500"/>',0]];
document.getElementById('tools').innerHTML=T.map(t=>t==='-'?'<div class="tsep"></div>':`<button class="tool${t[2]?' m':''}${t[0]==='Marquee'?' on':''}" aria-label="${t[0]}"><svg width="20" height="20">${t[1]}</svg></button>`).join('')+'<button class="d-block ps-1" aria-label="Colors"><svg width="32" height="14"><path d="M4 6H12V14H4Z" fill="#fff" stroke="#555"/><path d="M0 2H8V10H0Z"/><path d="M20 5H23Q26 5 26 9M22 2 19 5 22 8M24 8 26 11 28 8" fill="none" stroke="#333" stroke-width="1.500"/></svg></button>';
</script>
<script src="https://cdn.jsdelivr.net/npm/bootstrap@5.3.0/dist/js/bootstrap.bundle.min.js"></script>
</body>
</html>
